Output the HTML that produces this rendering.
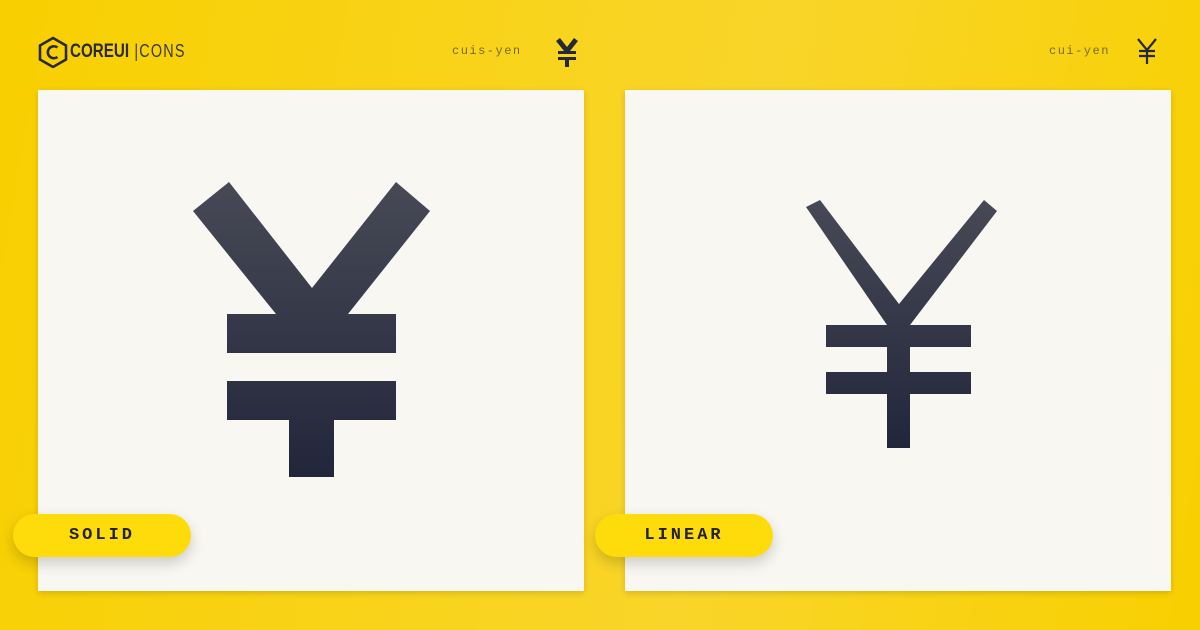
<!DOCTYPE html>
<html><head><style>
body{margin:0;width:1200px;height:630px;overflow:hidden;background:linear-gradient(100deg,#f8d000 0%,#f9d52a 60%,#f8d000 100%);font-family:"Liberation Sans",sans-serif;position:relative}
.panel{position:absolute;top:90px;width:546px;height:501px;background:#f8f7f2;box-shadow:0 2px 6px rgba(0,0,0,.15)}
.badge{position:absolute;top:514px;width:178px;height:43px;border-radius:22px;background:#fedb0a;box-shadow:0 6px 14px rgba(0,0,0,.18);font-family:"Liberation Mono",monospace;font-weight:bold;font-size:17px;letter-spacing:3px;text-align:center;line-height:43px;color:#222}
.lbl{position:absolute;top:44px;font-family:"Liberation Mono",monospace;font-size:12px;letter-spacing:1.5px;color:#7a6a20}
</style></head><body>
<svg style="position:absolute;left:37px;top:36px" width="32" height="32" viewBox="0 0 32 32"><polygon points="16,2 29,9.5 29,23.5 16,31 3,23.5 3,9.5" fill="none" stroke="#2a2a35" stroke-width="2.6"/><path d="M20.5 11.5 A6 6 0 1 0 20.5 21" fill="none" stroke="#2a2a35" stroke-width="2.6"/></svg>
<div style="position:absolute;left:70px;top:41px;font-size:19px;font-weight:bold;color:#2a2a35;transform:scaleX(0.8);transform-origin:0 0;white-space:nowrap">COREUI<span style="font-weight:normal;color:#3a3a40;letter-spacing:1.5px;font-size:18px"> |CONS</span></div>
<div class="lbl" style="left:452px">cuis-yen</div>
<div class="lbl" style="left:1049px">cui-yen</div>
<svg style="position:absolute;left:554px;top:37px" width="26" height="32" viewBox="0 0 26 32"><path d="M2 4 L6 1 L13 10 L20 1 L24 4 L16 14 H22 V17 H4 V14 H10 Z M4 20 H22 V23 H15 V30 H11 V23 H4 Z" fill="#252836"/></svg>
<svg style="position:absolute;left:1136px;top:38px" width="22" height="28" viewBox="0 0 22 28"><path d="M2 1 L11 12 L20 1 M11 12 V26 M3 13 H19 M3 18 H19" fill="none" stroke="#252836" stroke-width="2.2"/></svg>
<div class="panel" style="left:38px"></div>
<div class="panel" style="left:625px"></div>
<svg style="position:absolute;left:0;top:0" width="1200" height="630">
<defs><linearGradient id="g" x1="0" y1="0" x2="0" y2="1"><stop offset="0" stop-color="#474955"/><stop offset="1" stop-color="#22263a"/></linearGradient></defs>
<path d="M193 211 L229 182 L312 288 L396 182 L430 211 L348 314 H396 V353 H227 V314 H276 Z M227 381 H396 V420 H334 V477 H289 V420 H227 Z" fill="url(#g)"/>
<path d="M806 207 L820 200 L899 304 L984 200 L997 211 L910 325 H971 V347 H910 V372 H971 V394 H910 V448 H887 V394 H826 V372 H887 V347 H826 V325 H887 Z" fill="url(#g)"/>
</svg>
<div class="badge" style="left:13px">SOLID</div>
<div class="badge" style="left:595px">LINEAR</div>
</body></html>
